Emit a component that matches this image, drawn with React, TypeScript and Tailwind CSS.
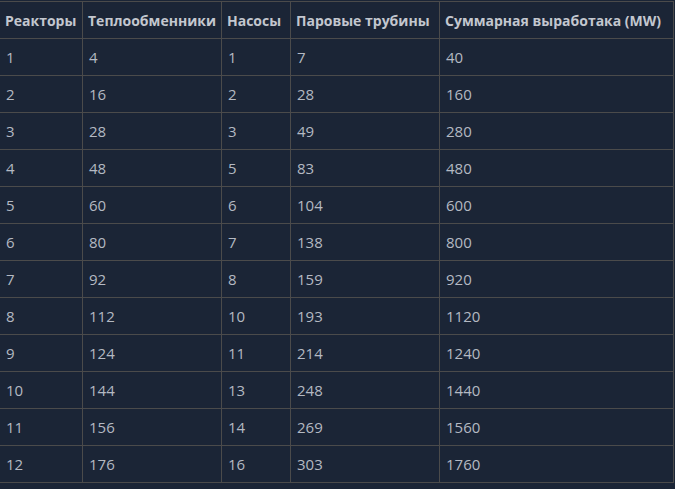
const headers = ['Реакторы', 'Теплообменники', 'Насосы', 'Паровые трубины', 'Суммарная выработака (MW)'];

const rows = [
  [1, 4, 1, 7, 40],
  [2, 16, 2, 28, 160],
  [3, 28, 3, 49, 280],
  [4, 48, 5, 83, 480],
  [5, 60, 6, 104, 600],
  [6, 80, 7, 138, 800],
  [7, 92, 8, 159, 920],
  [8, 112, 10, 193, 1120],
  [9, 124, 11, 214, 1240],
  [10, 144, 13, 248, 1440],
  [11, 156, 14, 269, 1560],
  [12, 176, 16, 303, 1760],
];

export default function App() {
  return (
    <div className="w-[675px] h-[489px] overflow-hidden bg-[#1b2536] pt-px font-['Open_Sans',sans-serif]">
      <table className="table-fixed border-collapse -ml-px w-[674px] text-[15px] text-[#b4b9c2]">
        <colgroup>
          <col className="w-[83px]" />
          <col className="w-[139px]" />
          <col className="w-[69px]" />
          <col className="w-[149px]" />
          <col className="w-[234px]" />
        </colgroup>
        <thead>
          <tr>
            {headers.map((h) => (
              <th key={h} className="h-[37px] border border-[#4b4b4b] px-[5px] text-left text-[14px] font-bold text-[#c3c7cf] whitespace-nowrap">
                {h}
              </th>
            ))}
          </tr>
        </thead>
        <tbody>
          {rows.map((r, i) => (
            <tr key={i}>
              {r.map((v, j) => (
                <td key={j} className="h-[37px] border border-[#4b4b4b] px-[6px] leading-none">
                  {v}
                </td>
              ))}
            </tr>
          ))}
        </tbody>
      </table>
    </div>
  );
}
